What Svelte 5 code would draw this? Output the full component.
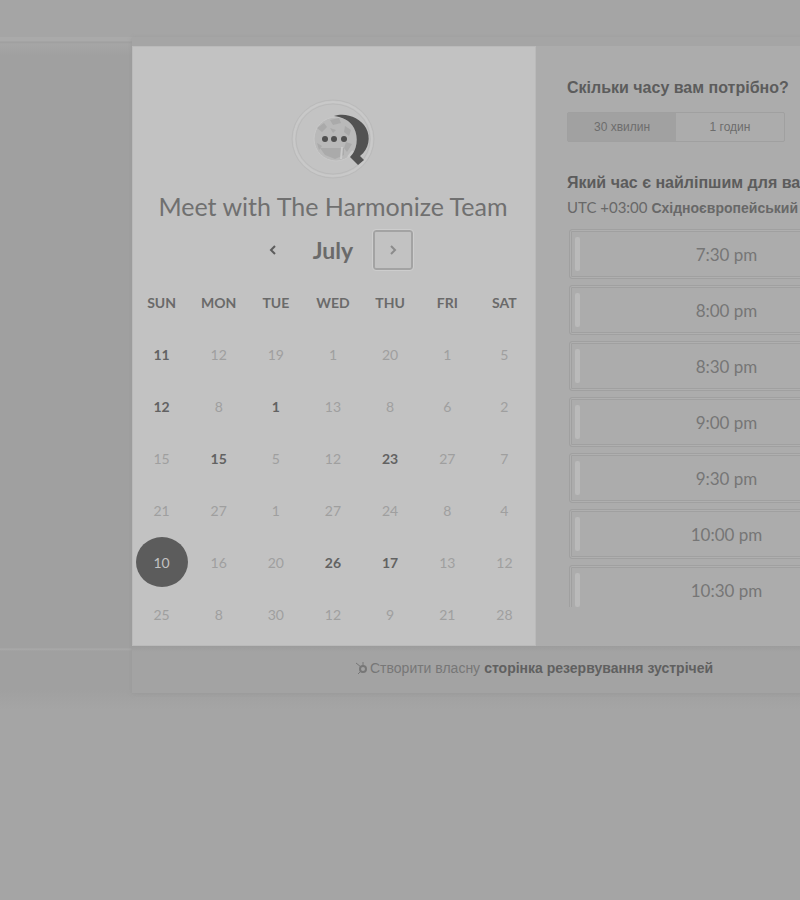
<script>
  const days = ['SUN', 'MON', 'TUE', 'WED', 'THU', 'FRI', 'SAT'];
  const weeks = [
    [11, 12, 19, 1, 20, 1, 5],
    [12, 8, 1, 13, 8, 6, 2],
    [15, 15, 5, 12, 23, 27, 7],
    [21, 27, 1, 27, 24, 8, 4],
    [10, 16, 20, 26, 17, 13, 12],
    [25, 8, 30, 12, 9, 21, 28]
  ];
  const open = new Set(['0-0', '1-0', '1-2', '2-1', '2-4', '4-3', '4-4']);
  const slots = ['7:30 pm', '8:00 pm', '8:30 pm', '9:00 pm', '9:30 pm', '10:00 pm', '10:30 pm'];
  let selected = $state('4-0');
  let duration = $state('30');
</script>

<main class="page">
  <div class="widget">
    <div class="top">
      <section class="calendar">
        <svg class="avatar" width="84" height="80" viewBox="0 0 84 80" aria-hidden="true">
          <ellipse cx="42" cy="40" rx="41" ry="39" fill="#c3c3c3" stroke="#bababa" />
          <ellipse cx="42" cy="40" rx="39" ry="37" fill="none" stroke="#c9c9c9" stroke-width="2" />
          <ellipse cx="42" cy="40" rx="37" ry="35" fill="none" stroke="#bababa" />
          <circle cx="45" cy="40" r="22" fill="#b9b9b9" stroke="#c9c9c9" />
          <path d="M26 29l7-5 3 4-5 5zM39 21l9-2 2 5-8 2zM54 27l6 4-2 6-5-4zM26 44l5 3-3 4zM55 43l6 2-5 8-3-4zM39 29l6 2-3 3zM29 49h24v7l-9 4-10-4z" fill="#aaaaaa" />
          <path d="M43 17C54 13 69 18 75 29C80 38 78 50 69 57L73 61L67 66L59 58C66 51 68 39 63 29C59 21 51 18 43 17Z" fill="#525252" />
          <path d="M50 60l1-12M57 58l5-6" stroke="#cbcbcb" stroke-width="2" />
          <g fill="#505050"><circle cx="34" cy="40" r="3" /><circle cx="43" cy="40" r="3" /><circle cx="53" cy="40" r="3" /></g>
        </svg>
        <h1>Meet with The Harmonize Team</h1>
        <div class="month">
          <button aria-label="Previous month">
            <svg width="8" height="12" viewBox="0 0 8 12"><path d="M6 2L2 6L6 10" fill="none" stroke="#5c5c5c" stroke-width="2" /></svg>
          </button>
          <h2>July</h2>
          <button class="next" aria-label="Next month">
            <svg width="8" height="12" viewBox="0 0 8 12"><path d="M2 2L6 6L2 10" fill="none" stroke="#8b8b8b" stroke-width="2" /></svg>
          </button>
        </div>
        <table>
          <thead>
            <tr>{#each days as day}<th scope="col">{day}</th>{/each}</tr>
          </thead>
          <tbody>
            {#each weeks as week, r}
              <tr>
                {#each week as date, c}
                  <td>
                    <button
                      class="date"
                      class:open={open.has(`${r}-${c}`)}
                      class:selected={selected === `${r}-${c}`}
                      onclick={() => (selected = `${r}-${c}`)}>{date}</button>
                  </td>
                {/each}
              </tr>
            {/each}
          </tbody>
        </table>
      </section>

      <section class="times">
        <h3>Скільки часу вам потрібно?</h3>
        <div class="durations">
          <button class:active={duration === '30'} onclick={() => (duration = '30')}>30 хвилин</button>
          <button class:active={duration === '60'} onclick={() => (duration = '60')}>1 годин</button>
        </div>
        <h3>Який час є найліпшим для вас?</h3>
        <p class="zone"><span>UTC +03:00</span> Східноєвропейський</p>
        <div class="slots">
          {#each slots as slot}<button>{slot}</button>{/each}
        </div>
      </section>
    </div>
    <footer>
      <svg width="13" height="14" viewBox="0 0 13 14" aria-hidden="true">
        <g fill="none" stroke="#777777"><circle cx="8" cy="8" r="3" stroke-width="2" /><path d="M1 2L6 6M8 5V1M6 10L3 13" /></g>
      </svg>
      <span>Створити власну</span> <a href="#meetings">сторінка резервування зустрічей</a>
    </footer>
  </div>
</main>

<style>
  :global(body) { background: #a5a5a5; }
  .page {
    box-sizing: border-box;
    min-height: 100vh;
    padding: 37px 0 40px 132px;
    overflow: hidden;
    font-family: "Liberation Sans", Arial, sans-serif;
    color: #5c5c5c;
    background: linear-gradient(#a5a5a5 37px, #aaaaaa 37px, #aaaaaa 41px, #9e9e9e 42px, #a6a6a6 44px, #a0a0a0 56px, #a0a0a0 648px, #aaaaaa 649px, #a0a0a0 651px, #a0a0a0 690px, #a5a5a5 710px);
  }
  h1, h2, h3, p { margin: 0; font-weight: 400; white-space: nowrap; }
  button { padding: 0; border: 0; background: none; color: inherit; font: inherit; cursor: pointer; }
  .widget { min-width: 788px; border-top: 9px solid #a5a5a5; box-shadow: 0 1px 4px #999999; }
  .top { display: flex; background: #acacac; }
  .calendar {
    flex: 0 0 404px;
    box-sizing: border-box;
    display: flex;
    flex-direction: column;
    align-items: center;
    padding: 53px 3px 6px 1px;
    background: #c2c2c2;
    box-shadow: inset 0 0 0 1px #bababa;
    font-family: Lato, "Open Sans", sans-serif;
  }
  .avatar { display: block; }
  h1 { margin-top: 11px; font-size: 25px; line-height: 32px; color: #707070; }
  .month { display: flex; align-items: center; gap: 20px; margin-top: 8px; }
  .month button { display: grid; place-items: center; box-sizing: border-box; width: 40px; height: 40px; }
  .month .next { border: 2px solid #a3a3a3; border-radius: 3px; outline: 1px solid #cdcdcd; }
  h2 { font-size: 23px; line-height: 40px; font-weight: 700; color: #6a6a6a; }
  table { width: 100%; margin-top: 13px; table-layout: fixed; border-collapse: collapse; }
  th { height: 38px; padding: 0; font-size: 14px; font-weight: 700; color: #6a6a6a; }
  td { height: 52px; padding: 0; text-align: center; }
  tbody::before { content: ""; display: block; height: 7px; }
  .date { width: 52px; height: 50px; border-radius: 50%; font-size: 14px; color: #9f9f9f; }
  .date.open { font-weight: 700; color: #626262; }
  .date.selected { background: #5c5c5c; color: #c2c2c2; }
  .times { flex: 1; min-width: 0; padding: 31px 36px 0 31px; }
  h3 { font-size: 16px; line-height: 22px; font-weight: 700; }
  .durations { display: flex; box-sizing: border-box; width: 218px; height: 30px; margin: 13px 0 30px; border: 1px solid #a0a0a0; border-radius: 2px; }
  .durations button { flex: 1; font-size: 12px; color: #6d6d6d; }
  .durations .active { background: #a1a1a1; }
  .zone { font-size: 14px; line-height: 26px; font-weight: 700; color: #686868; }
  .zone span { font-family: Lato, sans-serif; font-size: 15px; font-weight: 400; }
  .slots { display: flex; flex-direction: column; gap: 6px; height: 378px; margin: 8px 0 34px; padding-left: 2px; overflow: hidden; }
  .slots button {
    flex: 0 0 50px;
    box-sizing: border-box;
    display: flex;
    align-items: center;
    justify-content: center;
    position: relative;
    border: 1px solid #a0a0a0;
    border-radius: 3px;
    box-shadow: inset 0 0 0 1px #afafaf, inset 0 0 0 2px #a0a0a0;
    font: 17px Lato, sans-serif;
    color: #767676;
  }
  .slots button::before { content: ""; position: absolute; left: 5px; top: 7px; bottom: 7px; width: 5px; border-radius: 2px; background: #bababa; }
  footer {
    display: flex;
    align-items: center;
    box-sizing: border-box;
    height: 47px;
    padding: 0 0 3px 223px;
    background: linear-gradient(#9c9c9c, #a3a3a3 6px, #a3a3a3);
    font-size: 14px;
    white-space: nowrap;
    color: #777777;
  }
  footer span { margin: 0 4px 0 2px; }
  footer a { font-weight: 700; color: #606060; text-decoration: none; }
</style>
